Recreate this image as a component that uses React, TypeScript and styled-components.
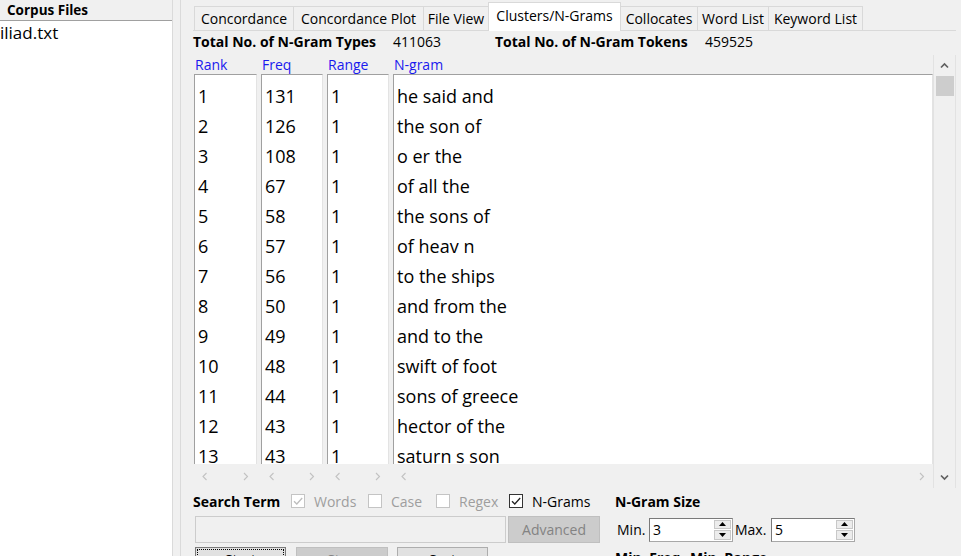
import React from 'react';
import styled, { createGlobalStyle, css } from 'styled-components';

const Global = createGlobalStyle`
  html, body { margin: 0; padding: 0; background: #f0f0f0; overflow: hidden; }
  body { font-family: "Open Sans", "Noto Sans", sans-serif; font-size: 14px; color: #000; }
  * { box-sizing: border-box; }
`;

const Window = styled.div`
  display: flex;
  width: 961px;
  height: 556px;
  overflow: hidden;
  background: #f0f0f0;
`;

const LeftPane = styled.div`
  width: 173px;
  flex-shrink: 0;
  display: flex;
  flex-direction: column;
  border-right: 1px solid #dadada;
`;

const PaneTitle = styled.div`
  height: 20px;
  flex-shrink: 0;
  padding: 1px 0 0 7px;
  font-weight: 700;
  font-size: 13.5px;
  line-height: 19px;
`;

const FileList = styled.div`
  flex: 1;
  background: #fff;
  border-top: 1px solid #a0a0a0;
  padding: 2px 0 0 0;
  font-size: 17px;
  line-height: 20px;
`;

const Splitter = styled.div`
  width: 8px;
  flex-shrink: 0;
  border-right: 1px solid #dadada;
`;

const RightPane = styled.div`
  flex: 1;
  display: flex;
  flex-direction: column;
  padding: 0 5px 0 12px;
  min-width: 0;
`;

const TabBar = styled.div`
  display: flex;
  flex-shrink: 0;
  align-items: flex-end;
  height: 31px;
  padding-left: 1px;
  border-bottom: 1px solid #d9d9d9;
`;

const Tab = styled.div<{ $w: number; $active?: boolean }>`
  width: ${(p) => p.$w}px;
  flex-shrink: 0;
  height: 24px;
  margin-left: -1px;
  border: 1px solid #d9d9d9;
  border-bottom: none;
  background: #f0f0f0;
  text-align: center;
  line-height: 23px;
  white-space: nowrap;
  font-size: 14px;
  ${(p) =>
    p.$active &&
    css`
      height: 29px;
      margin-bottom: -1px;
      background: #fff;
      position: relative;
      z-index: 1;
      line-height: 24px;
      padding-top: 1px;
    `}
  &:first-child { margin-left: 0; }
`;

const Totals = styled.div`
  display: flex;
  flex-shrink: 0;
  height: 24px;
  line-height: 22px;
  white-space: nowrap;
`;

const TotLabel = styled.span<{ $w: number }>`
  width: ${(p) => p.$w}px;
  font-weight: 700;
`;

const TotValue = styled.span<{ $w?: number }>`
  width: ${(p) => (p.$w ? `${p.$w}px` : 'auto')};
`;

const TableArea = styled.div`
  display: flex;
  flex-shrink: 0;
  height: 433px;
`;

const Columns = styled.div`
  flex: 1;
  display: grid;
  grid-template-columns: 63px 62px 62px 1fr;
  column-gap: 4px;
  padding-left: 1px;
  min-width: 0;
`;

const Column = styled.div`
  display: flex;
  flex-direction: column;
  min-width: 0;
`;

const HeadLabel = styled.div`
  height: 19px;
  flex-shrink: 0;
  line-height: 19px;
  color: #1a1aee;
  padding-left: 1px;
  white-space: nowrap;
`;

const Box = styled.div`
  height: 390px;
  flex-shrink: 0;
  background: #fff;
  border-top: 1px solid #a0a0a0;
  border-left: 1px solid #a0a0a0;
  border-right: 1px solid #e3e3e3;
  overflow: hidden;
  padding: 6px 0 0 3px;
`;

const Cell = styled.div`
  height: 30px;
  flex-shrink: 0;
  line-height: 30px;
  font-size: 18px;
  white-space: nowrap;
`;

const HScroll = styled.div`
  height: 24px;
  flex-shrink: 0;
  display: flex;
  align-items: center;
  justify-content: space-between;
`;

const ArrowBtn = styled.div`
  width: 22px;
  height: 22px;
  display: flex;
  align-items: center;
  justify-content: center;
`;

const VScroll = styled.div`
  width: 23px;
  flex-shrink: 0;
  display: flex;
  flex-direction: column;
  border-left: 1px solid #e2e2e2;
  border-right: 1px solid #e2e2e2;
  background: #f0f0f0;
`;

const VBtn = styled.div`
  height: 21px;
  flex-shrink: 0;
  display: flex;
  align-items: center;
  justify-content: center;
`;

const Thumb = styled.div`
  height: 20px;
  flex-shrink: 0;
  margin: 0 1px 0 2px;
  background: #cdcdcd;
`;

const Track = styled.div`
  flex: 1;
`;

const Bottom = styled.div`
  display: grid;
  flex-shrink: 0;
  grid-template-columns: 408px 1fr;
  column-gap: 14px;
`;

const Stack = styled.div`
  display: flex;
  flex-direction: column;
`;

const SearchRow = styled.div`
  display: flex;
  flex-shrink: 0;
  align-items: center;
  height: 26px;
  white-space: nowrap;
`;

const BoldLabel = styled.span<{ $w?: number }>`
  font-weight: 700;
  width: ${(p) => (p.$w ? `${p.$w}px` : 'auto')};
  white-space: nowrap;
`;

const CheckItem = styled.label<{ $w?: number; $disabled?: boolean }>`
  display: flex;
  align-items: center;
  gap: 9px;
  width: ${(p) => (p.$w ? `${p.$w}px` : 'auto')};
  color: ${(p) => (p.$disabled ? '#9e9e9e' : '#000')};
`;

const CheckBox = styled.span<{ $disabled?: boolean }>`
  width: 14px;
  height: 14px;
  border: 1px solid ${(p) => (p.$disabled ? '#c4c4c4' : '#333')};
  background: #fff;
  display: flex;
  align-items: center;
  justify-content: center;
`;

const InputRow = styled.div`
  display: flex;
  flex-shrink: 0;
  margin-top: 2px;
  height: 27px;
  padding-left: 2px;
  gap: 2px;
`;

const TextInput = styled.div`
  width: 311px;
  height: 27px;
  border: 1px solid #cccccc;
  background: #f0f0f0;
`;

const Button = styled.div<{ $w: number; $variant?: 'disabled' | 'focus' | 'normal' }>`
  width: ${(p) => p.$w}px;
  height: 27px;
  display: flex;
  align-items: center;
  justify-content: center;
  border: 1px solid #adadad;
  background: #e1e1e1;
  color: #000;
  ${(p) =>
    p.$variant === 'disabled' &&
    css`
      background: #cccccc;
      border-color: #bfbfbf;
      color: #838383;
    `}
  ${(p) =>
    p.$variant === 'focus' &&
    css`
      border-color: #7a7a7a;
      outline: 1px dotted #000;
      outline-offset: -3px;
    `}
`;

const ButtonRow = styled.div`
  display: flex;
  flex-shrink: 0;
  margin-top: 4px;
  padding-left: 2px;
  height: 30px;
  align-items: flex-start;
`;

const ActionBtn = styled(Button)<{ $ml?: number }>`
  margin-left: ${(p) => p.$ml ?? 0}px;
  height: 28px;
  align-items: flex-start;
  padding-top: 2px;
`;

const SpinRow = styled.div`
  display: flex;
  flex-shrink: 0;
  align-items: center;
  height: 27px;
  margin-top: 2px;
  padding-left: 2px;
`;

const SpinLabel = styled.span<{ $w: number; $ml?: number }>`
  width: ${(p) => p.$w}px;
  margin-left: ${(p) => p.$ml ?? 0}px;
`;

const Spin = styled.div`
  width: 84px;
  height: 24px;
  display: flex;
  background: #fff;
  border: 1px solid #a8a8a8;
  border-top-color: #7a7a7a;
  border-left-color: #7a7a7a;
`;

const SpinValue = styled.div`
  flex: 1;
  padding-left: 3px;
  line-height: 21px;
`;

const SpinBtns = styled.div`
  width: 18px;
  display: flex;
  flex-direction: column;
  gap: 1px;
  padding: 1px 1px 1px 0;
`;

const SpinBtn = styled.div`
  flex: 1;
  background: #ececec;
  border: 1px solid #c8c8c8;
  display: flex;
  align-items: center;
  justify-content: center;
`;

const FreqRow = styled.div`
  display: flex;
  flex-shrink: 0;
  margin-top: 2px;
  height: 26px;
  line-height: 26px;
`;

const rows: [string, string, string, string][] = [
  ['1', '131', '1', 'he said and'],
  ['2', '126', '1', 'the son of'],
  ['3', '108', '1', 'o er the'],
  ['4', '67', '1', 'of all the'],
  ['5', '58', '1', 'the sons of'],
  ['6', '57', '1', 'of heav n'],
  ['7', '56', '1', 'to the ships'],
  ['8', '50', '1', 'and from the'],
  ['9', '49', '1', 'and to the'],
  ['10', '48', '1', 'swift of foot'],
  ['11', '44', '1', 'sons of greece'],
  ['12', '43', '1', 'hector of the'],
  ['13', '43', '1', 'saturn s son'],
];

const tabs: [string, number][] = [
  ['Concordance', 100],
  ['Concordance Plot', 131],
  ['File View', 66],
  ['Clusters/N-Grams', 133],
  ['Collocates', 78],
  ['Word List', 72],
  ['Keyword List', 95],
];

const Chevron = ({ dir, color }: { dir: 'up' | 'down' | 'left' | 'right'; color: string }) => {
  if (dir === 'up' || dir === 'down') {
    const d = dir === 'up' ? 'M1 5.5 L4.5 2 L8 5.5' : 'M1 1.5 L4.5 5 L8 1.5';
    return (
      <svg width="9" height="7" viewBox="0 0 9 7">
        <path d={d} fill="none" stroke={color} strokeWidth="1.7" />
      </svg>
    );
  }
  const d = dir === 'left' ? 'M4.5 1 L1 4.5 L4.5 8' : 'M1 1 L4.5 4.5 L1 8';
  return (
    <svg width="6" height="9" viewBox="0 0 6 9">
      <path d={d} fill="none" stroke={color} strokeWidth="1.1" />
    </svg>
  );
};

const Tick = ({ color }: { color: string }) => (
  <svg width="12" height="12" viewBox="0 0 12 12">
    <path d="M2 6.2 L4.8 9 L10.2 3" fill="none" stroke={color} strokeWidth="1.3" />
  </svg>
);

const Tri = ({ up }: { up?: boolean }) => (
  <svg width="7" height="4" viewBox="0 0 7 4">
    <path d={up ? 'M0 4 L3.5 0 L7 4 Z' : 'M0 0 L3.5 4 L7 0 Z'} fill="#000" />
  </svg>
);

const HBar = () => (
  <HScroll>
    <ArrowBtn>
      <Chevron dir="left" color="#c2c2c2" />
    </ArrowBtn>
    <ArrowBtn>
      <Chevron dir="right" color="#c2c2c2" />
    </ArrowBtn>
  </HScroll>
);

const SpinBox = ({ value }: { value: string }) => (
  <Spin>
    <SpinValue>{value}</SpinValue>
    <SpinBtns>
      <SpinBtn>
        <Tri up />
      </SpinBtn>
      <SpinBtn>
        <Tri />
      </SpinBtn>
    </SpinBtns>
  </Spin>
);

export default function App() {
  const heads = ['Rank', 'Freq', 'Range', 'N-gram'];
  return (
    <>
      <Global />
      <Window>
        <LeftPane>
          <PaneTitle>Corpus Files</PaneTitle>
          <FileList>iliad.txt</FileList>
        </LeftPane>
        <Splitter />
        <RightPane>
          <TabBar>
            {tabs.map(([t, w]) => (
              <Tab key={t} $w={w} $active={t === 'Clusters/N-Grams'}>
                {t}
              </Tab>
            ))}
          </TabBar>
          <Totals>
            <TotLabel $w={200}>Total No. of N-Gram Types</TotLabel>
            <TotValue $w={102}>411063</TotValue>
            <TotLabel $w={210}>Total No. of N-Gram Tokens</TotLabel>
            <TotValue>459525</TotValue>
          </Totals>
          <TableArea>
            <Columns>
              {heads.map((h, ci) => (
                <Column key={h}>
                  <HeadLabel>{h}</HeadLabel>
                  <Box>
                    {rows.map((r) => (
                      <Cell key={r[0]}>{r[ci]}</Cell>
                    ))}
                  </Box>
                  <HBar />
                </Column>
              ))}
            </Columns>
            <VScroll>
              <VBtn>
                <Chevron dir="up" color="#606060" />
              </VBtn>
              <Thumb />
              <Track />
              <VBtn>
                <Chevron dir="down" color="#606060" />
              </VBtn>
            </VScroll>
          </TableArea>
          <Bottom>
            <Stack>
              <SearchRow>
                <BoldLabel $w={98}>Search Term</BoldLabel>
                <CheckItem $w={77} $disabled>
                  <CheckBox $disabled>
                    <Tick color="#bdbdbd" />
                  </CheckBox>
                  Words
                </CheckItem>
                <CheckItem $w={68} $disabled>
                  <CheckBox $disabled />
                  Case
                </CheckItem>
                <CheckItem $w={73} $disabled>
                  <CheckBox $disabled />
                  Regex
                </CheckItem>
                <CheckItem>
                  <CheckBox>
                    <Tick color="#222" />
                  </CheckBox>
                  N-Grams
                </CheckItem>
              </SearchRow>
              <InputRow>
                <TextInput />
                <Button $w={92} $variant="disabled">
                  Advanced
                </Button>
              </InputRow>
              <ButtonRow>
                <ActionBtn $w={91} $variant="focus">
                  Start
                </ActionBtn>
                <ActionBtn $w={92} $ml={10} $variant="disabled">
                  Stop
                </ActionBtn>
                <ActionBtn $w={91} $ml={9}>
                  Sort
                </ActionBtn>
              </ButtonRow>
            </Stack>
            <Stack>
              <SearchRow>
                <BoldLabel>N-Gram Size</BoldLabel>
              </SearchRow>
              <SpinRow>
                <SpinLabel $w={32}>Min.</SpinLabel>
                <SpinBox value="3" />
                <SpinLabel $w={36} $ml={2}>
                  Max.
                </SpinLabel>
                <SpinBox value="5" />
              </SpinRow>
              <FreqRow>
                <BoldLabel $w={75}>Min. Freq.</BoldLabel>
                <BoldLabel>Min. Range</BoldLabel>
              </FreqRow>
            </Stack>
          </Bottom>
        </RightPane>
      </Window>
    </>
  );
}
